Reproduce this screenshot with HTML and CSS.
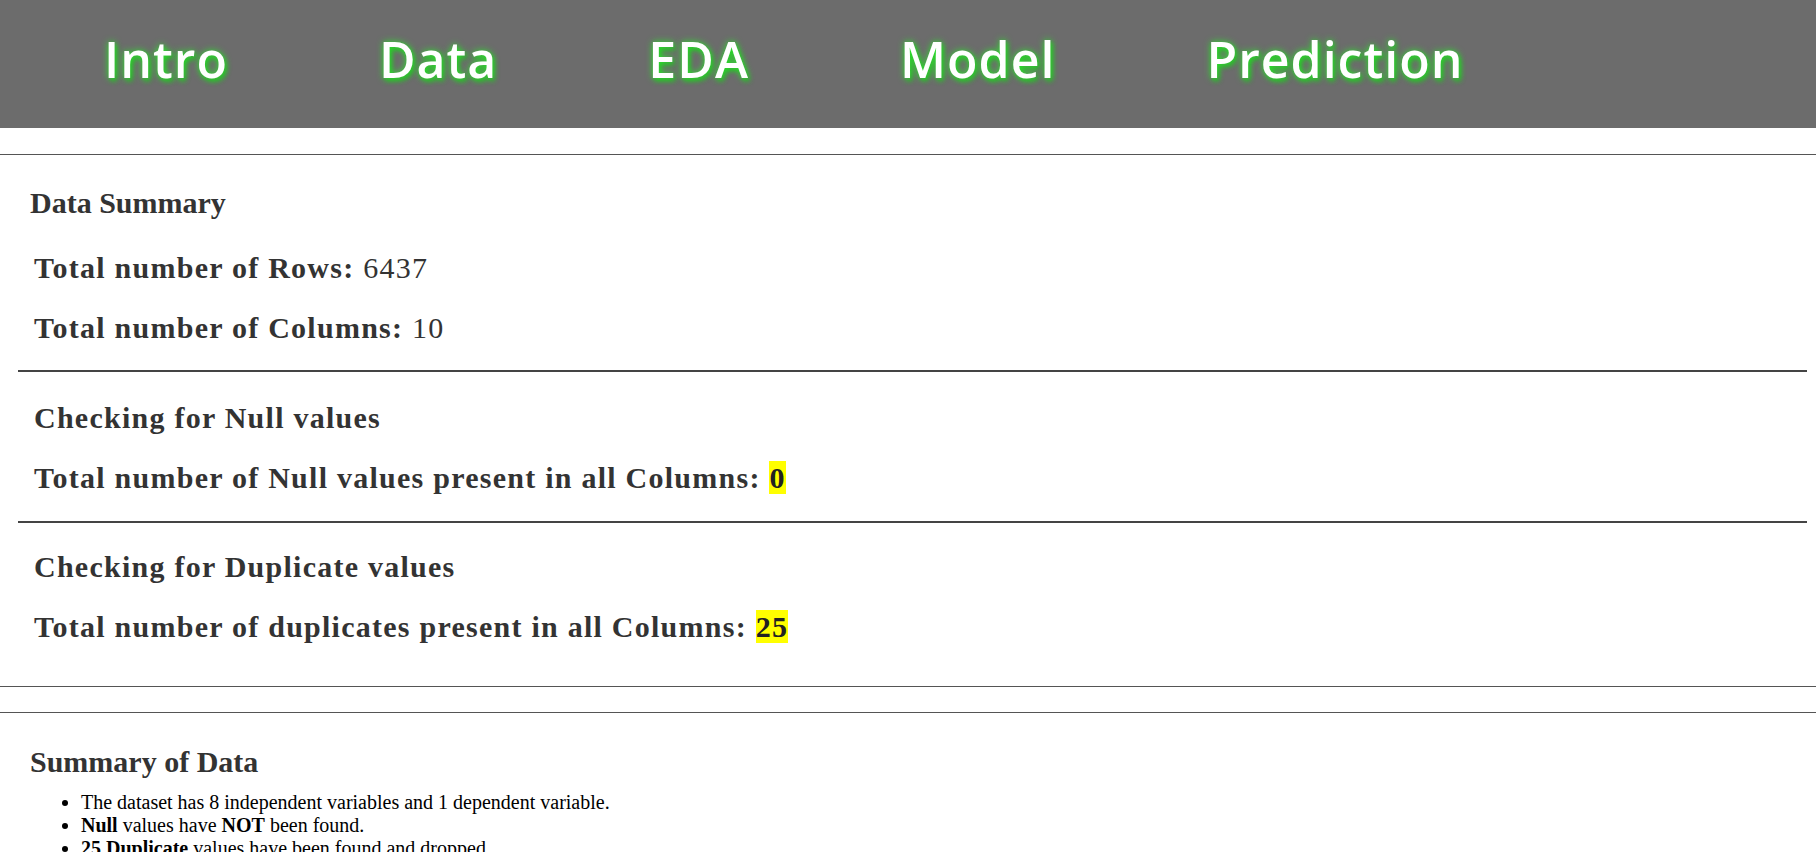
FILE: index.html
```html
<!DOCTYPE html>
<html lang="en">
<head>
<meta charset="utf-8">
<title>Data</title>
<link rel="stylesheet" href="styles.css">
</head>
<body>
<header class="topbar">
  <nav class="menu">
    <a class="menu-link" href="#">Intro</a>
    <a class="menu-link" href="#">Data</a>
    <a class="menu-link" href="#">EDA</a>
    <a class="menu-link" href="#">Model</a>
    <a class="menu-link" href="#">Prediction</a>
  </nav>
</header>
<hr class="rule rule-first">
<section class="stats">
  <h2 class="section-title">Data Summary</h2>
  <p class="stat stat-rows"><b>Total number of Rows:</b> 6437</p>
  <p class="stat stat-cols"><b>Total number of Columns:</b> 10</p>
  <hr class="divider">
  <h3 class="stat-head">Checking for Null values</h3>
  <p class="stat stat-total"><b>Total number of Null values present in all Columns: <mark class="hl">0</mark></b></p>
  <hr class="divider">
  <h3 class="stat-head">Checking for Duplicate values</h3>
  <p class="stat stat-total"><b>Total number of duplicates present in all Columns: <mark class="hl">25</mark></b></p>
</section>
<hr class="rule rule-end">
<hr class="rule rule-next">
<section class="notes">
  <h2 class="section-title notes-title">Summary of Data</h2>
  <ul class="notes-list">
    <li>The dataset has 8 independent variables and 1 dependent variable.</li>
    <li><b>Null</b> values have <b>NOT</b> been found.</li>
    <li><b>25 Duplicate</b> values have been found and dropped.</li>
  </ul>
</section>
</body>
</html>
```
FILE: styles.css
```css
html, body {
  margin: 0;
  padding: 0;
  background: #ffffff;
}

body {
  font-family: "Liberation Serif", "Times New Roman", serif;
  font-size: 20px;
  color: #000;
}

.topbar {
  height: 128px;
  background: #6c6c6c;
  box-sizing: border-box;
  padding-top: 27px;
}

.menu {
  display: flex;
  gap: 151px;
  padding-left: 104px;
}

.menu-link {
  font-family: "Open Sans", "Noto Sans", sans-serif;
  font-weight: 600;
  font-size: 50px;
  letter-spacing: 1px;
  line-height: 64px;
  color: #ffffff;
  text-decoration: none;
  text-shadow: 0 0 7px #2ee62e, 2px 3px 5px #1fbf1f;
}

.rule {
  border: 0;
  border-top: 1px solid #555;
  height: 0;
  margin: 0;
}

.rule-first {
  margin-top: 26px;
}

.stats {
  padding: 0 9px 0 18px;
  color: #333;
}

.section-title {
  font-size: 30px;
  line-height: 34px;
  font-weight: bold;
  margin: 0;
  color: #333;
}

.stats .section-title {
  margin-top: 31px;
  padding-left: 12px;
}

.stat, .stat-head {
  font-size: 30px;
  line-height: 34px;
  font-weight: bold;
  letter-spacing: 1.25px;
  margin: 0;
  padding-left: 16px;
  color: #333;
}

.stat-rows { margin-top: 31px; }
.stat-cols { margin-top: 26px; }

.stat b { font-weight: bold; }
.stat-rows, .stat-cols { font-weight: normal; }

.divider {
  border: 0;
  border-top: 2px solid #444;
  height: 0;
  margin: 25px 0 0 0;
}

.divider + .stat-head { margin-top: 29px; }
.stat-head + .stat-total { margin-top: 26px; }
.stat-total + .divider { margin-top: 26px; }
.divider + .stat-head + .stat-total + .divider + .stat-head { margin-top: 27px; }

.hl {
  background: #ffff00;
  color: #222;
}

.rule-end { margin-top: 42px; }
.rule-next { margin-top: 25px; }

.notes {
  padding-left: 30px;
}

.notes-title {
  margin-top: 32px;
}

.notes-list {
  margin: 12px 0 0 0;
  padding-left: 51px;
  line-height: 23px;
}
```
